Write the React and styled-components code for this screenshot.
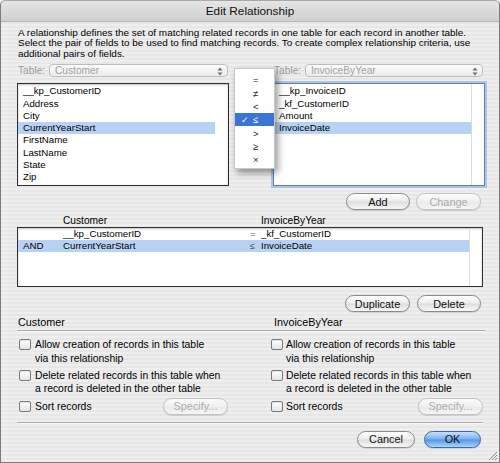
import React from "react";
import styled, { createGlobalStyle } from "styled-components";

const GlobalStyle = createGlobalStyle`
	html, body {
		margin: 0;
		padding: 0;
		background: #ffffff;
	}
	body {
		font-family: "Lucida Grande", "Liberation Sans", Arial, sans-serif;
		font-size: 10px;
		color: #000;
	}
	* { box-sizing: border-box; }
`

const Window = styled.div`
	position: relative;
	width: 500px;
	height: 463px;
	display: flex;
	flex-direction: column;
	border: 1px solid #7c7c7c;
	border-top: none;
	border-radius: 5px 5px 0 0;
	overflow: hidden;
	background: repeating-linear-gradient(to bottom, #eeeeee 0, #eeeeee 2px, #e7e7e7 2px, #e7e7e7 4px);
`

const TitleBar = styled.div`
	height: 22px;
	flex: none;
	display: flex;
	align-items: center;
	justify-content: center;
	font-size: 11.8px;
	color: #111;
	background: linear-gradient(#e6e6e6, #cfcfcf);
	border-bottom: 1px solid #b8b8b8;
	border-top: 1px solid #a8a8a8;
	border-radius: 5px 5px 0 0;
`

const Content = styled.div`
	flex: 1;
	display: flex;
	flex-direction: column;
	padding: 0 16px;
`

const Description = styled.p`
	margin: 6px 0 0 1px;
	line-height: 10.4px;
	font-size: 9.95px;
	white-space: nowrap;
`

const Pickers = styled.div`
	position: relative;
	display: grid;
	grid-template-columns: 212px 44px 212px;
	margin-top: 5px;
`

const PickerColumn = styled.div`
	display: flex;
	flex-direction: column;
`

const TableRow = styled.div`
	display: flex;
	align-items: center;
	height: 13px;
	padding: 0 ${p => p.$inset}px 0 1px;
	margin-bottom: 6px;
	font-size: 10.2px;
`

const TableLabel = styled.span`
	width: 31px;
	color: #9c9c9c;
`

const PopUp = styled.div`
	position: relative;
	flex: 1;
	height: 13px;
	display: flex;
	align-items: center;
	padding-left: 5px;
	color: #a3a3a3;
	border: 1px solid #bdbdbd;
	border-radius: 4px;
	background: linear-gradient(#fbfbfb, #ececec);
`

const PopArrows = styled.svg`
	position: absolute;
	right: 4px;
	top: 2px;
`

const ListBox = styled.div`
	height: 103px;
	display: flex;
	background: #fff;
	border: 1px solid ${p => (p.$focused ? "#5d7fb5" : "#2e2e2e")};
	box-shadow: ${p => (p.$focused ? "0 0 0 2px rgba(120, 165, 230, 0.55)" : "inset 0 1px 2px rgba(0,0,0,0.25)")};
`

const Rows = styled.div`
	flex: 1;
	padding-top: ${p => p.$top || 0}px;
	font-size: 9.7px;
`

const ScrollTrack = styled.div`
	width: 13px;
	border-left: 1px solid ${p => (p.$line ? "#dcdcdc" : "transparent")};
`

const ListRow = styled.div`
	height: 12.3px;
	line-height: 12.3px;
	padding-left: 5px;
	white-space: nowrap;
	background: ${p => (p.$selected ? "#b8d2f5" : "transparent")};
`

const OperatorMenu = styled.div`
	position: absolute;
	left: 217px;
	top: 4px;
	width: 41px;
	padding: 4px 0 2px;
	background: rgba(255, 255, 255, 0.97);
	border: 1px solid #c8c8c8;
	box-shadow: 3px 4px 7px rgba(0, 0, 0, 0.4);
	z-index: 2;
`

const MenuItem = styled.div`
	height: 13.3px;
	display: grid;
	grid-template-columns: 16px 1fr;
	align-items: center;
	font-size: 9.5px;
	color: ${p => (p.$selected ? "#fff" : "#222")};
	background: ${p => (p.$selected ? "#3b74d6" : "transparent")};
`

const Check = styled.span`
	text-align: right;
	padding-right: 2px;
	font-size: 9px;
`

const Symbol = styled.span`
	padding-left: 2px;
`

const ButtonRow = styled.div`
	display: flex;
	justify-content: flex-end;
	gap: ${p => p.$gap || 6}px;
	padding-right: 2px;
	margin-top: ${p => p.$top}px;
`

const Button = styled.button`
	width: ${p => p.$w}px;
	height: 17px;
	padding: 0;
	font-family: inherit;
	font-size: 10.9px;
	color: ${p => (p.disabled ? "#adadad" : "#111")};
	border-radius: 9px;
	border: 1px solid ${p => (p.$default ? "#3c69ad" : p.disabled ? "#c2c2c2" : "#8a8a8a")};
	background: ${p =>
		p.$default
			? "linear-gradient(#c6e0fa, #79b0ec 48%, #5596e2 52%, #a8d6fb)"
			: p.disabled
			? "linear-gradient(#fafafa, #f0f0f0 50%, #e9e9e9 52%, #f6f6f6)"
			: "linear-gradient(#ffffff, #ececec 48%, #dedede 52%, #f7f7f7)"};
	box-shadow: 0 1px 1px rgba(0, 0, 0, 0.12);
`

const CriteriaGrid = styled.div`
	display: grid;
	grid-template-columns: 40px 187px 11px 1fr;
	padding-left: 5px;
	height: ${p => p.$h}px;
	line-height: ${p => p.$h}px;
	white-space: nowrap;
	background: ${p => (p.$selected ? "#b8d2f5" : "transparent")};
`

const CriteriaHeader = styled(CriteriaGrid)`
	margin: 5px 0 1px 1px;
	font-size: 10.2px;
`

const CriteriaBox = styled.div`
	height: 60px;
	display: flex;
	background: #fff;
	border: 1px solid #2e2e2e;
	box-shadow: inset 0 1px 2px rgba(0,0,0,0.25);
`

const Op = styled.span`
	color: #555;
	font-size: 9px;
`

const Options = styled.div`
	display: grid;
	grid-template-columns: 254px 214px;
	margin-top: 5px;
	font-size: 10.4px;
`

const SectionHead = styled.div`
	grid-column: 1 / 3;
	display: grid;
	grid-template-columns: 256px 1fr;
	padding: 0 0 3px 1px;
	height: 14px;
	line-height: 11px;
	font-size: 10.8px;
	border-bottom: 1px solid #a9a9a9;
	box-shadow: 0 1px 0 #fafafa;
`

const OptionColumn = styled.div`
	display: flex;
	flex-direction: column;
	padding: 7px ${p => p.$right}px 0 ${p => p.$left}px;
`

const Option = styled.label`
	display: flex;
	align-items: flex-start;
	gap: ${p => p.$gap}px;
	line-height: 13.3px;
	margin-bottom: 3.8px;
	white-space: nowrap;
`

const Box = styled.span`
	flex: none;
	width: 12px;
	height: 11px;
	margin-top: 1px;
	border: 1px solid #7a7a7a;
	border-radius: 2px;
	background: linear-gradient(#ffffff, #e4e4e4);
	box-shadow: inset 0 1px 1px rgba(0,0,0,0.1);
`

const SortRow = styled.div`
	display: flex;
	align-items: center;
	justify-content: space-between;
	height: 17px;
	margin-top: -1.5px;
`

const SortLabel = styled.label`
	display: flex;
	align-items: center;
	gap: ${p => p.$gap}px;

	${Box} {
		margin-top: 0;
	}
`

const Separator = styled.div`
	height: 1px;
	background: #a9a9a9;
	box-shadow: 0 1px 0 #fafafa;
	margin-top: 7px;
`

const Grip = styled.svg`
	position: absolute;
	right: 1px;
	bottom: 1px;
`

const operators = ["=", "≠", "<", "≤", ">", "≥", "×"];
const customerFields = ["__kp_CustomerID", "Address", "City", "CurrentYearStart", "FirstName", "LastName", "State", "Zip"];
const invoiceFields = ["__kp_InvoiceID", "_kf_CustomerID", "Amount", "InvoiceDate"];

function Arrows() {
	return (
		<PopArrows width="6" height="9" viewBox="0 0 6 9">
			<path d="M3 0.5 L5.5 3.5 L0.5 3.5 Z" fill="#6e6e6e" />
			<path d="M3 8.5 L5.5 5.5 L0.5 5.5 Z" fill="#6e6e6e" />
		</PopArrows>
	);
}

function CheckOption({ gap, children }) {
	return (
		<Option $gap={gap}>
			<Box />
			<span>{children}</span>
		</Option>
	);
}

function OptionSet({ left, right, gap }) {
	return (
		<OptionColumn $left={left} $right={right}>
			<CheckOption gap={gap}>Allow creation of records in this table<br />via this relationship</CheckOption>
			<CheckOption gap={gap}>Delete related records in this table when<br />a record is deleted in the other table</CheckOption>
			<SortRow>
				<SortLabel $gap={gap}><Box />Sort records</SortLabel>
				<Button disabled $w={65}>Specify...</Button>
			</SortRow>
		</OptionColumn>
	);
}

export default function App() {
	return (
		<>
			<GlobalStyle />
			<Window>
				<TitleBar>Edit Relationship</TitleBar>
				<Content>
					<Description>
						A relationship defines the set of matching related records in one table for each record in another table.<br />
						Select the pair of fields to be used to find matching records. To create complex relationship criteria, use<br />
						additional pairs of fields.
					</Description>

					<Pickers>
						<PickerColumn>
							<TableRow $inset={1}>
								<TableLabel>Table:</TableLabel>
								<PopUp>Customer<Arrows /></PopUp>
							</TableRow>
							<ListBox>
								<Rows $top={1}>
									{customerFields.map(f => (
										<ListRow key={f} $selected={f === "CurrentYearStart"}>{f}</ListRow>
									))}
								</Rows>
								<ScrollTrack />
							</ListBox>
						</PickerColumn>
						<div />
						<PickerColumn>
							<TableRow $inset={2}>
								<TableLabel>Table:</TableLabel>
								<PopUp>InvoiceByYear<Arrows /></PopUp>
							</TableRow>
							<ListBox $focused>
								<Rows $top={1}>
									{invoiceFields.map(f => (
										<ListRow key={f} $selected={f === "InvoiceDate"}>{f}</ListRow>
									))}
								</Rows>
								<ScrollTrack $line />
							</ListBox>
						</PickerColumn>

						<OperatorMenu>
							{operators.map(op => (
								<MenuItem key={op} $selected={op === "≤"}>
									<Check>{op === "≤" ? "✓" : ""}</Check>
									<Symbol>{op}</Symbol>
								</MenuItem>
							))}
						</OperatorMenu>
					</Pickers>

					<ButtonRow $top={7}>
						<Button $w={64}>Add</Button>
						<Button disabled $w={65}>Change</Button>
					</ButtonRow>

					<CriteriaHeader $h={11}>
						<span />
						<span>Customer</span>
						<span />
						<span>InvoiceByYear</span>
					</CriteriaHeader>
					<CriteriaBox>
						<Rows>
							<CriteriaGrid $h={12}>
								<span />
								<span>__kp_CustomerID</span>
								<Op>=</Op>
								<span>_kf_CustomerID</span>
							</CriteriaGrid>
							<CriteriaGrid $h={12} $selected>
								<span>AND</span>
								<span>CurrentYearStart</span>
								<Op>≤</Op>
								<span>InvoiceDate</span>
							</CriteriaGrid>
						</Rows>
						<ScrollTrack $line />
					</CriteriaBox>

					<ButtonRow $top={8} $gap={7}>
						<Button $w={65}>Duplicate</Button>
						<Button $w={64}>Delete</Button>
					</ButtonRow>

					<Options>
						<SectionHead>
							<span>Customer</span>
							<span>InvoiceByYear</span>
						</SectionHead>
						<OptionSet left={2} right={43} gap={4} />
						<OptionSet left={0} right={2} gap={3} />
					</Options>

					<Separator />

					<ButtonRow $top={8} $gap={9}>
						<Button $w={58}>Cancel</Button>
						<Button $default $w={57}>OK</Button>
					</ButtonRow>
				</Content>
				<Grip width="11" height="11" viewBox="0 0 11 11">
					<path d="M10 2 L2 10 M10 5 L5 10 M10 8 L8 10" stroke="#8c8c8c" strokeWidth="1" />
				</Grip>
			</Window>
		</>
	);
}
